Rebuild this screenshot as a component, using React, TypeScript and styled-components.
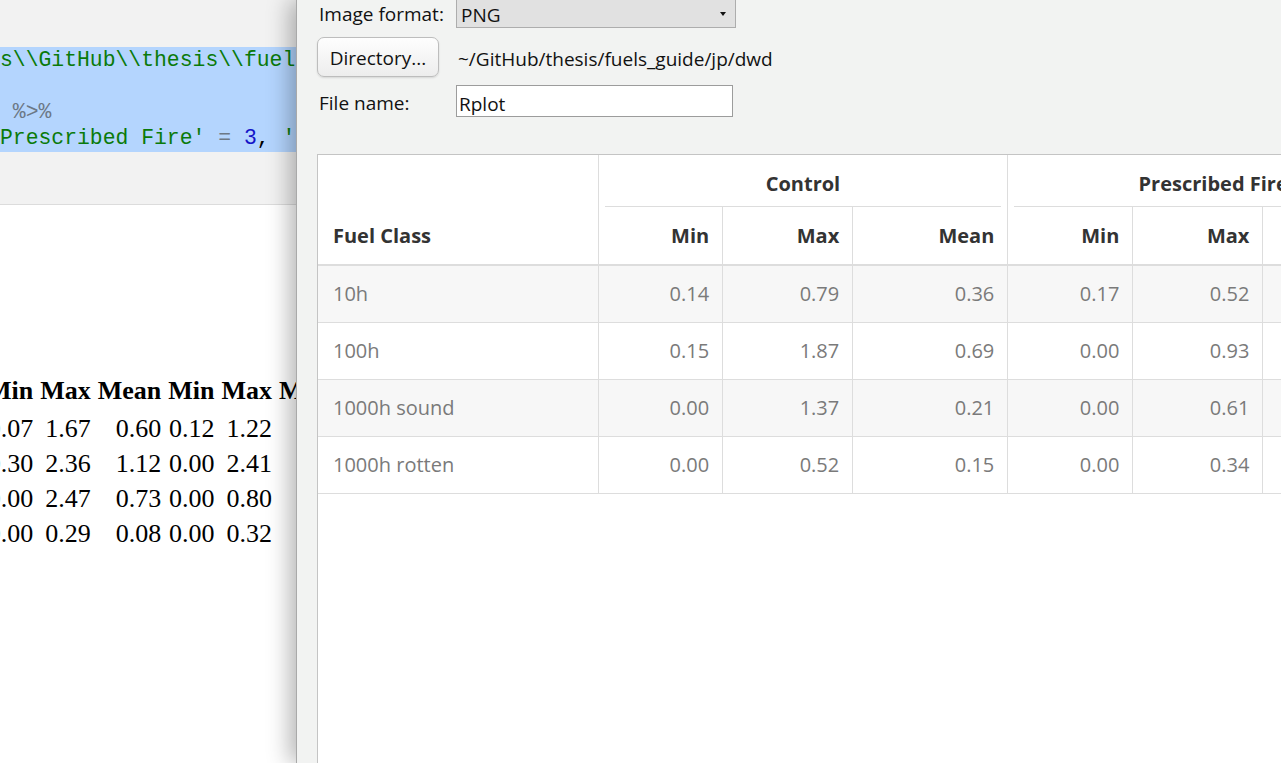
import React from 'react'
import styled, { createGlobalStyle } from 'styled-components'

const GlobalStyle = createGlobalStyle`
  html, body {
    margin: 0;
    padding: 0;
    height: 100%;
    overflow: hidden;
    background: #ffffff;
  }
  #root {
    height: 100%;
  }
`

const Screen = styled.div`
  display: flex;
  width: 1281px;
  height: 763px;
  overflow: hidden;
`

/* ---------- page behind the dialog ---------- */

const Backdrop = styled.div`
  width: 296px;
  flex-shrink: 0;
  display: flex;
  flex-direction: column;
  background: #ffffff;
  overflow: hidden;
`

const Editor = styled.div`
  height: 205px;
  padding-top: 47px;
  box-sizing: border-box;
  background: #f2f2f2;
  border-bottom: 1px solid #dcdcdc;
  overflow: hidden;
`

const Selection = styled.div`
  height: 105px;
  background: #b4d5fe;
`

const CodeLine = styled.div`
  height: 26px;
  line-height: 26px;
  font-family: 'Liberation Mono', 'DejaVu Sans Mono', monospace;
  font-size: 21.4px;
  white-space: pre;
`

const Token = styled.span<{ $tone: 'str' | 'op' | 'num' | 'plain' }>`
  color: ${p =>
    p.$tone === 'str' ? '#0a7a0a' : p.$tone === 'op' ? '#6c7886' : p.$tone === 'num' ? '#1414c8' : '#000000'};
`

const Output = styled.div`
  padding-top: 164px;
  overflow: hidden;
`

const PlainTable = styled.table`
  margin-left: -20px;
  border-spacing: 7px 2px;
  border-collapse: separate;
  font-family: 'Liberation Serif', 'Times New Roman', serif;
  font-size: 26px;
  color: #000000;
  white-space: nowrap;

  th {
    padding: 0;
    height: 39px;
    line-height: 39px;
    font-weight: bold;
    text-align: center;
  }

  td {
    padding: 0;
    height: 33px;
    line-height: 33px;
    text-align: right;
  }
`

/* ---------- dialog ---------- */

const Dialog = styled.div`
  position: relative;
  z-index: 1;
  flex: 1;
  min-width: 0;
  display: flex;
  flex-direction: column;
  padding-left: 20px;
  background: #f2f3f2;
  border-left: 1px solid #a9a9a9;
  box-shadow: -6px 0 22px rgba(0, 0, 0, 0.3);
  font-family: 'Open Sans', 'Noto Sans', sans-serif;
  font-size: 19px;
  color: #111111;
`

const Form = styled.div`
  display: grid;
  grid-template-columns: 139px 1fr;
  grid-template-rows: 32px 40px 32px;
  row-gap: 8.5px;
  align-items: center;
  margin-top: -4px;
`

const Label = styled.div`
  padding-left: 2px;
  padding-top: 3px;
`

const Select = styled.div`
  position: relative;
  width: 280px;
  height: 32px;
  box-sizing: border-box;
  padding-left: 4px;
  padding-top: 3px;
  line-height: 30px;
  background: #e1e1e1;
  border: 1px solid #adadad;

  &::after {
    content: '';
    position: absolute;
    right: 9px;
    top: 15px;
    border-left: 3.5px solid transparent;
    border-right: 3.5px solid transparent;
    border-top: 4px solid #111111;
  }
`

const Button = styled.button`
  width: 122px;
  height: 40px;
  box-sizing: border-box;
  border: 1px solid #bdbdbd;
  border-radius: 7px;
  background: linear-gradient(#fefefe, #ededed);
  box-shadow: 0 1px 2px rgba(0, 0, 0, 0.12);
  font: inherit;
  color: inherit;
  padding: 2px 0 0;
`

const PathText = styled.div`
  padding-left: 2px;
  padding-top: 4px;
`

const Input = styled.div`
  width: 277px;
  height: 32px;
  box-sizing: border-box;
  padding-left: 2px;
  padding-top: 4px;
  line-height: 28px;
  background: #ffffff;
  border: 1px solid #9c9c9c;
`

const TablePanel = styled.div`
  flex: 1;
  margin-top: 37px;
  background: #ffffff;
  border-top: 1px solid #c4c4c4;
  border-left: 1px solid #c4c4c4;
  overflow: hidden;
`

const DataTable = styled.table`
  width: 1100px;
  table-layout: fixed;
  border-collapse: collapse;
  font-family: 'Open Sans', 'Noto Sans', sans-serif;
  font-size: 20px;
`

const HeadCell = styled.th<{ $align: 'left' | 'right' | 'center'; $bottom?: boolean; $lead?: boolean }>`
  padding: ${p => (p.$align === 'center' ? '0 6px' : p.$align === 'left' ? '0 13px 15px 15px' : '0 13px')};
  text-align: ${p => p.$align};
  vertical-align: ${p => (p.$align === 'right' ? 'middle' : 'bottom')};
  font-weight: 700;
  color: #333333;
  white-space: nowrap;
  border-left: ${p => (p.$lead ? 'none' : '1px solid #dddddd')};
  border-bottom: ${p => (p.$bottom ? '2px solid #dddddd' : 'none')};
`

const Spanner = styled.div`
  padding: 15px 0 9px;
  line-height: 27px;
  border-bottom: 1px solid #dddddd;
`

const Row = styled.tr<{ $striped: boolean }>`
  height: 57px;
  background: ${p => (p.$striped ? '#f7f7f7' : '#ffffff')};
`

const Cell = styled.td<{ $first?: boolean }>`
  padding: ${p => (p.$first ? '0 13px 0 15px' : '0 13px')};
  text-align: ${p => (p.$first ? 'left' : 'right')};
  color: #7a7a7a;
  white-space: nowrap;
  border-bottom: 1px solid #dddddd;
  border-left: ${p => (p.$first ? 'none' : '1px solid #dddddd')};
`

const columnWidths = [280, 124.5, 130, 155, 125, 130, 155]
const statNames = ['Min', 'Max', 'Mean', 'Min', 'Max', 'Mean']

const fuelRows = [
  ['10h', '0.14', '0.79', '0.36', '0.17', '0.52', '0.33'],
  ['100h', '0.15', '1.87', '0.69', '0.00', '0.93', '0.41'],
  ['1000h sound', '0.00', '1.37', '0.21', '0.00', '0.61', '0.12'],
  ['1000h rotten', '0.00', '0.52', '0.15', '0.00', '0.34', '0.07'],
]

const consoleRows = [
  ['0.07', '1.67', '0.60', '0.12', '1.22', '0.48'],
  ['0.30', '2.36', '1.12', '0.00', '2.41', '0.95'],
  ['0.00', '2.47', '0.73', '0.00', '0.80', '0.27'],
  ['0.00', '0.29', '0.08', '0.00', '0.32', '0.09'],
]

const App = () => {
  return (
    <Screen>
      <GlobalStyle />
      <Backdrop>
        <Editor>
          <Selection>
            <CodeLine>
              <Token $tone="str">{'s\\\\GitHub\\\\thesis\\\\fuel'}</Token>
            </CodeLine>
            <CodeLine> </CodeLine>
            <CodeLine>
              <Token $tone="op">{' %>%'}</Token>
            </CodeLine>
            <CodeLine>
              <Token $tone="str">{"Prescribed Fire'"}</Token>
              <Token $tone="op">{' = '}</Token>
              <Token $tone="num">3</Token>
              <Token $tone="plain">{', '}</Token>
              <Token $tone="str">{"'"}</Token>
            </CodeLine>
          </Selection>
        </Editor>
        <Output>
          <PlainTable>
            <thead>
              <tr>
                {statNames.map((name, i) => (
                  <th key={i}>{name}</th>
                ))}
              </tr>
            </thead>
            <tbody>
              {consoleRows.map((row, r) => (
                <tr key={r}>
                  {row.map((value, c) => (
                    <td key={c}>{value}</td>
                  ))}
                </tr>
              ))}
            </tbody>
          </PlainTable>
        </Output>
      </Backdrop>

      <Dialog>
        <Form>
          <Label>Image format:</Label>
          <Select>PNG</Select>
          <Button>Directory...</Button>
          <PathText>~/GitHub/thesis/fuels_guide/jp/dwd</PathText>
          <Label>File name:</Label>
          <Input>Rplot</Input>
        </Form>
        <TablePanel>
          <DataTable>
            <colgroup>
              {columnWidths.map((w, i) => (
                <col key={i} style={{ width: w }} />
              ))}
            </colgroup>
            <thead>
              <tr style={{ height: 51 }}>
                <HeadCell $align="left" $lead $bottom rowSpan={2}>
                  Fuel Class
                </HeadCell>
                <HeadCell $align="center" colSpan={3}>
                  <Spanner>Control</Spanner>
                </HeadCell>
                <HeadCell $align="center" colSpan={3}>
                  <Spanner>Prescribed Fire</Spanner>
                </HeadCell>
              </tr>
              <tr style={{ height: 58 }}>
                {statNames.map((name, i) => (
                  <HeadCell key={i} $align="right" $bottom>
                    {name}
                  </HeadCell>
                ))}
              </tr>
            </thead>
            <tbody>
              {fuelRows.map((row, r) => (
                <Row key={row[0]} $striped={r % 2 === 0}>
                  {row.map((value, c) => (
                    <Cell key={c} $first={c === 0}>
                      {value}
                    </Cell>
                  ))}
                </Row>
              ))}
            </tbody>
          </DataTable>
        </TablePanel>
      </Dialog>
    </Screen>
  )
}

export default App
